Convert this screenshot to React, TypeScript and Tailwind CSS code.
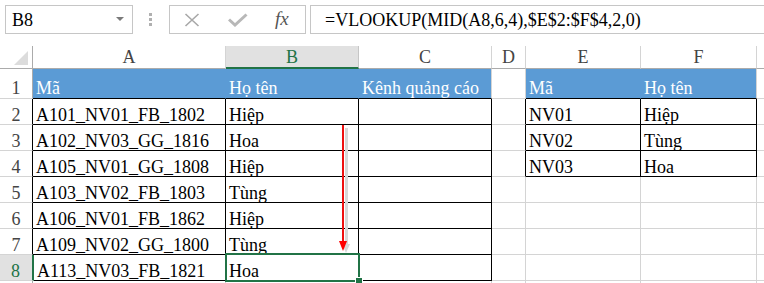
import React from "react";

type CellProps = {
  w: string;
  cls: string;
  children?: React.ReactNode;
};

function Cell({ w, cls, children }: CellProps) {
  return <div className={`${w} shrink-0 h-full box-border border-r border-b flex ${cls}`}>{children}</div>;
}

const txt = "font-['Liberation_Serif'] text-[18px] leading-[18px] whitespace-nowrap";

function RowHdr({ n, last, sel }: { n: number; last?: boolean; sel?: boolean }) {
  if (sel) {
    return (
      <div className="w-[34px] shrink-0 h-full box-border border-r-2 border-b border-r-[#217346] border-b-[#d4d4d4] bg-[#e1e1e1] flex items-end justify-center pr-[1px]">
        <span className={`${txt} text-[#217346]`}>{n}</span>
      </div>
    );
  }
  return (
    <Cell
      w="w-[33px]"
      cls={`${last ? "border-r-[#ababab]" : "border-r-black"} border-b-[#d4d4d4] bg-white items-end justify-center`}
    >
      <span className={`${txt} text-[#444]`}>{n}</span>
    </Cell>
  );
}

const dataA = [
  ["A101_NV01_FB_1802", "Hiệp"],
  ["A102_NV03_GG_1816", "Hoa"],
  ["A105_NV01_GG_1808", "Hiệp"],
  ["A103_NV02_FB_1803", "Tùng"],
  ["A106_NV01_FB_1862", "Hiệp"],
  ["A109_NV02_GG_1800", "Tùng"],
  ["A113_NV03_FB_1821", "Hoa"],
];

const dataE = [
  ["NV01", "Hiệp"],
  ["NV02", "Tùng"],
  ["NV03", "Hoa"],
];

export default function App() {
  return (
    <div className="w-[764px] h-[283px] overflow-hidden bg-white font-['Liberation_Serif'] text-black">
      {/* Formula bar */}
      <div className="flex items-start h-[46px] pt-[5px] pl-[5px]">
        <div className="w-[128px] h-[29px] shrink-0 box-border border border-[#c6c6c6] flex items-center justify-between pl-[6px] pr-[8px]">
          <span className={`${txt} pt-[1px]`}>B8</span>
          <svg width="8" height="5" viewBox="0 0 8 5">
            <polygon points="0,0 8,0 4,4" fill="#7a7a7a" />
          </svg>
        </div>
        <div className="w-[36px] h-[29px] shrink-0 flex flex-col items-center justify-center gap-[2px] pr-[1px]">
          <div className="w-[3px] h-[3px] bg-[#b0b0b0]" />
          <div className="w-[3px] h-[3px] bg-[#b0b0b0]" />
          <div className="w-[3px] h-[3px] bg-[#b0b0b0]" />
        </div>
        <div className="w-[137px] h-[29px] shrink-0 box-border border border-[#c6c6c6] flex items-center">
          <svg className="ml-[14px] shrink-0" width="16" height="14" viewBox="0 0 16 14">
            <path d="M1.5 1 L14.5 13 M14.5 1 L1.5 13" stroke="#a8a8a8" strokeWidth="1.6" fill="none" />
          </svg>
          <svg className="ml-[28px] shrink-0" width="20" height="14" viewBox="0 0 20 14">
            <path d="M1 6.5 L7 12 L18.5 1.5" stroke="#b8b8b8" strokeWidth="3" fill="none" />
          </svg>
          <span className="ml-[27px] font-['Liberation_Serif'] text-[19px] leading-[18px] italic text-[#555] pb-[1px]">
            fx
          </span>
        </div>
        <div className="ml-[4px] w-[470px] h-[29px] shrink-0 box-border border border-[#c6c6c6] flex items-center pl-[14px]">
          <span className={`${txt} pt-[1px]`}>=VLOOKUP(MID(A8,6,4),$E$2:$F$4,2,0)</span>
        </div>
      </div>

      {/* Grid */}
      <div className="relative">
        {/* Column headers */}
        <div className="flex h-[23px]">
          <Cell w="w-[33px]" cls="border-r-[#ababab] border-b-[#ababab] bg-white items-end justify-end relative">
            <svg className="mr-[4px] mb-[3px]" width="14" height="14" viewBox="0 0 14 14">
              <polygon points="14,0 14,14 0,14" fill="#dcdcdc" />
            </svg>
          </Cell>
          <Cell w="w-[193px]" cls="border-r-[#d4d4d4] border-b-[#ababab] items-center justify-center">
            <span className={`${txt} text-[#444]`}>A</span>
          </Cell>
          <div className="w-[133px] shrink-0 h-full box-border border-r border-b-2 border-r-[#c6c6c6] border-b-[#217346] bg-[#e1e1e1] flex items-center justify-center pt-[1px]">
            <span className={`${txt} text-[#217346]`}>B</span>
          </div>
          <Cell w="w-[133px]" cls="border-r-[#d4d4d4] border-b-[#ababab] items-center justify-center">
            <span className={`${txt} text-[#444]`}>C</span>
          </Cell>
          <Cell w="w-[34px]" cls="border-r-[#d4d4d4] border-b-[#ababab] items-center justify-center">
            <span className={`${txt} text-[#444]`}>D</span>
          </Cell>
          <Cell w="w-[115px]" cls="border-r-[#d4d4d4] border-b-[#ababab] items-center justify-center">
            <span className={`${txt} text-[#444]`}>E</span>
          </Cell>
          <Cell w="w-[116px]" cls="border-r-[#d4d4d4] border-b-[#ababab] items-center justify-center">
            <span className={`${txt} text-[#444]`}>F</span>
          </Cell>
          <Cell w="w-[40px]" cls="border-r-[#d4d4d4] border-b-[#ababab]" />
        </div>

        {/* Row 1 */}
        <div className="flex h-[30px]">
          <Cell w="w-[33px]" cls="border-r-[#ababab] border-b-[#d4d4d4] items-end justify-center pb-[1px]">
            <span className={`${txt} text-[#444]`}>1</span>
          </Cell>
          <Cell w="w-[193px]" cls="border-r-[#5b9bd5] border-b-black bg-[#5b9bd5] items-end pl-[3px] pb-[1px]">
            <span className={`${txt} text-white`}>Mã</span>
          </Cell>
          <Cell w="w-[133px]" cls="border-r-[#5b9bd5] border-b-black bg-[#5b9bd5] items-end pl-[3px] pb-[1px]">
            <span className={`${txt} text-white`}>Họ tên</span>
          </Cell>
          <Cell w="w-[133px]" cls="border-r-[#d4d4d4] border-b-black bg-[#5b9bd5] items-end pl-[3px] pb-[1px]">
            <span className={`${txt} text-white`}>Kênh quảng cáo</span>
          </Cell>
          <Cell w="w-[34px]" cls="border-r-[#d4d4d4] border-b-[#d4d4d4]" />
          <Cell w="w-[115px]" cls="border-r-[#5b9bd5] border-b-black bg-[#5b9bd5] items-end pl-[3px] pb-[1px]">
            <span className={`${txt} text-white`}>Mã</span>
          </Cell>
          <Cell w="w-[116px]" cls="border-r-[#d4d4d4] border-b-black bg-[#5b9bd5] items-end pl-[3px] pb-[1px]">
            <span className={`${txt} text-white`}>Họ tên</span>
          </Cell>
          <Cell w="w-[40px]" cls="border-r-[#d4d4d4] border-b-[#d4d4d4]" />
        </div>

        {/* Rows 2-8 */}
        {dataA.map((r, i) => {
          const rowNum = i + 2;
          const e = dataE[i];
          const sel = rowNum === 8;
          return (
            <div key={rowNum} className="flex h-[26px]">
              <RowHdr n={rowNum} sel={sel} />
              <Cell w={sel ? "w-[192px]" : "w-[193px]"} cls="border-r-black border-b-black items-end pl-[3px]">
                <span className={txt}>{r[0]}</span>
              </Cell>
              <Cell w="w-[133px]" cls="border-r-black border-b-black items-end pl-[3px]">
                <span className={txt}>{r[1]}</span>
              </Cell>
              <Cell w="w-[133px]" cls="border-r-black border-b-black" />
              <Cell w="w-[34px]" cls={`${e ? "border-r-black" : "border-r-[#d4d4d4]"} border-b-[#d4d4d4]`} />
              <Cell w="w-[115px]" cls={`${e ? "border-r-black border-b-black" : "border-r-[#d4d4d4] border-b-[#d4d4d4]"} items-end pl-[3px]`}>
                {e && <span className={txt}>{e[0]}</span>}
              </Cell>
              <Cell w="w-[116px]" cls={`${e ? "border-r-black border-b-black" : "border-r-[#d4d4d4] border-b-[#d4d4d4]"} items-end pl-[3px]`}>
                {e && <span className={txt}>{e[1]}</span>}
              </Cell>
              <Cell w="w-[40px]" cls="border-r-[#d4d4d4] border-b-[#d4d4d4]" />
            </div>
          );
        })}

        {/* Row 9 (partial) */}
        <div className="flex h-[26px]">
          <Cell w="w-[33px]" cls="border-r-[#ababab] border-b-[#d4d4d4]" />
          <Cell w="w-[193px]" cls="border-r-[#d4d4d4] border-b-[#d4d4d4]" />
          <Cell w="w-[133px]" cls="border-r-[#d4d4d4] border-b-[#d4d4d4]" />
          <Cell w="w-[133px]" cls="border-r-[#d4d4d4] border-b-[#d4d4d4]" />
          <Cell w="w-[34px]" cls="border-r-[#d4d4d4] border-b-[#d4d4d4]" />
          <Cell w="w-[115px]" cls="border-r-[#d4d4d4] border-b-[#d4d4d4]" />
          <Cell w="w-[116px]" cls="border-r-[#d4d4d4] border-b-[#d4d4d4]" />
          <Cell w="w-[40px]" cls="border-r-[#d4d4d4] border-b-[#d4d4d4]" />
        </div>

        {/* Red arrow overlay */}
        <svg className="absolute left-[336px] top-[79px]" width="16" height="130" viewBox="0 0 16 130">
          <rect x="9" y="3" width="3" height="117" fill="#d8d8d8" />
          <polygon points="6,119 14,119 10,128" fill="#d8d8d8" />
          <rect x="6" y="0" width="2" height="118" fill="#ee1111" />
          <polygon points="3,116 11,116 7,126" fill="#ff0000" />
        </svg>

        {/* Selection overlay */}
        <div className="absolute left-[225px] top-[207px] w-[135px] h-[29px] box-border border-2 border-[#217346]" />
        <div className="absolute left-[355px] top-[231px] w-[8px] h-[8px] box-border border border-white bg-[#217346]" />
      </div>
    </div>
  );
}
